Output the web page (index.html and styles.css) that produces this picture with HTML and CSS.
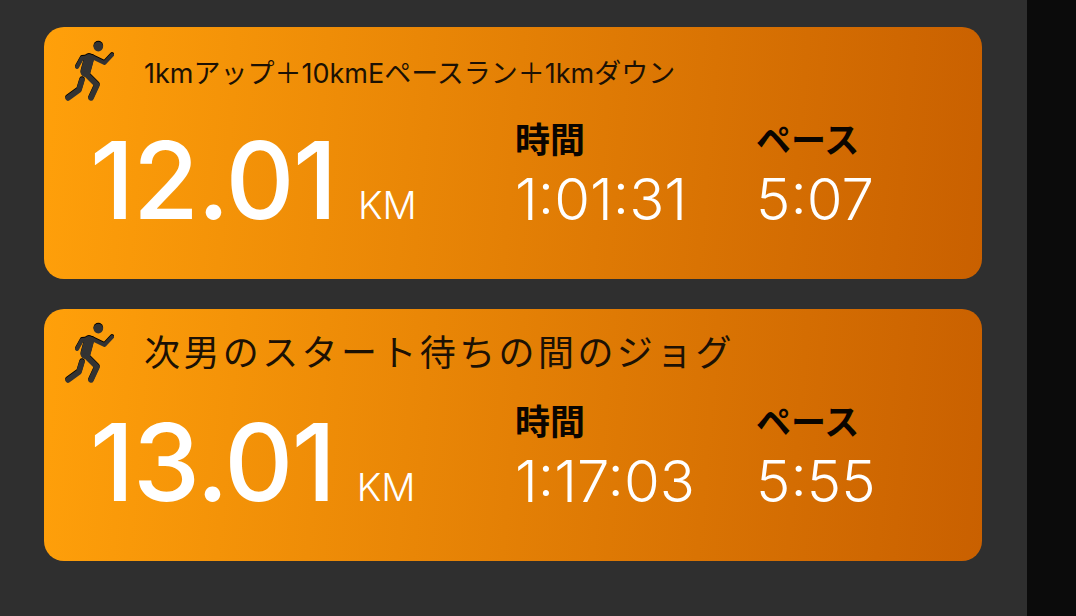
FILE: index.html
```html
<!DOCTYPE html>
<html lang="ja">
<head>
<meta charset="utf-8">
<title>ランニング記録</title>
<link rel="stylesheet" href="styles.css">
</head>
<body>
<div class="page">
  <main class="list">
    <section class="card">
      <header class="head">
        <svg class="runner" viewBox="12 8 55 66"><use href="#run"/></svg>
        <h2 class="title title-small">1kmアップ＋10kmEペースラン＋1kmダウン</h2>
      </header>
      <div class="stats">
        <div class="distance"><span class="big">12.01</span><span class="unit">KM</span></div>
        <div class="stat stat-time"><div class="label">時間</div><div class="value">1:01:31</div></div>
        <div class="stat"><div class="label">ペース</div><div class="value">5:07</div></div>
      </div>
    </section>
    <section class="card">
      <header class="head">
        <svg class="runner" viewBox="12 8 55 66"><use href="#run"/></svg>
        <h2 class="title">次男のスタート待ちの間のジョグ</h2>
      </header>
      <div class="stats">
        <div class="distance"><span class="big">13.01</span><span class="unit">KM</span></div>
        <div class="stat stat-time"><div class="label">時間</div><div class="value">1:17:03</div></div>
        <div class="stat"><div class="label">ペース</div><div class="value">5:55</div></div>
      </div>
    </section>
  </main>
  <aside class="edge"></aside>
</div>
<svg class="defs" width="0" height="0">
  <defs>
    <g id="run">
      <circle cx="48.3" cy="16.6" r="4.8" fill="#333"/>
      <g fill="none" stroke="#333" stroke-linecap="round" stroke-linejoin="round">
        <path d="M42 27 L54.5 33 L62 25" stroke-width="4"/>
        <path d="M42 27 L32 28 L27 37" stroke-width="4"/>
        <path d="M39 29 L35.5 42" stroke-width="10"/>
        <path d="M36 44 L47 55 L41 68" stroke-width="5.5"/>
        <path d="M32 50 L29 60 L18 68" stroke-width="5.5"/>
      </g>
    </g>
  </defs>
</svg>
</body>
</html>
```
FILE: styles.css
```css
* { box-sizing: border-box; }
html, body { margin: 0; height: 100%; }
body { background: #2f2f2f; overflow: hidden; font-family: Inter, "Noto Sans CJK JP", sans-serif; }
.page { display: flex; height: 616px; }
.list { flex: 1; display: flex; flex-direction: column; gap: 30px; padding: 27px 45px 0 44px; }
.edge { width: 49px; background: #0b0b0b; }
.defs { display: block; }
.card {
  height: 252px;
  border-radius: 20px;
  background: linear-gradient(95deg, #ffa00a 0%, #c96000 100%);
  padding: 11px 0 0 18px;
}
.head { display: flex; align-items: center; gap: 27px; height: 66px; }
.runner { width: 55px; height: 66px; flex: none; filter: drop-shadow(0 -1px 0 #000); }
.title { margin: 0; font-family: Inter, "Noto Sans CJK JP", sans-serif; font-weight: 400; font-size: 36px; letter-spacing: 3.4px; color: #1c1104; white-space: nowrap; line-height: 46px; }
.title-small { font-size: 27px; letter-spacing: 0; position: relative; top: 3px; }
.stats { display: flex; margin-top: 14px; padding-left: 28px; }
.distance { width: 425px; height: 140px; padding-top: 12px; display: flex; align-items: baseline; color: #fff; }
.big { font-size: 107px; line-height: 100px; font-weight: 500; letter-spacing: -1.5px; }
.unit { font-size: 38px; margin-left: 22px; font-weight: 300; }
.stat { display: flex; flex-direction: column; }
.stat-time { width: 241px; }
.label { font-family: "Noto Sans CJK JP", sans-serif; font-size: 35px; font-weight: 700; line-height: 40px; color: #0a0500; }
.value { font-size: 58px; font-weight: 300; line-height: 60px; margin-top: 11px; color: #fff; }
```
